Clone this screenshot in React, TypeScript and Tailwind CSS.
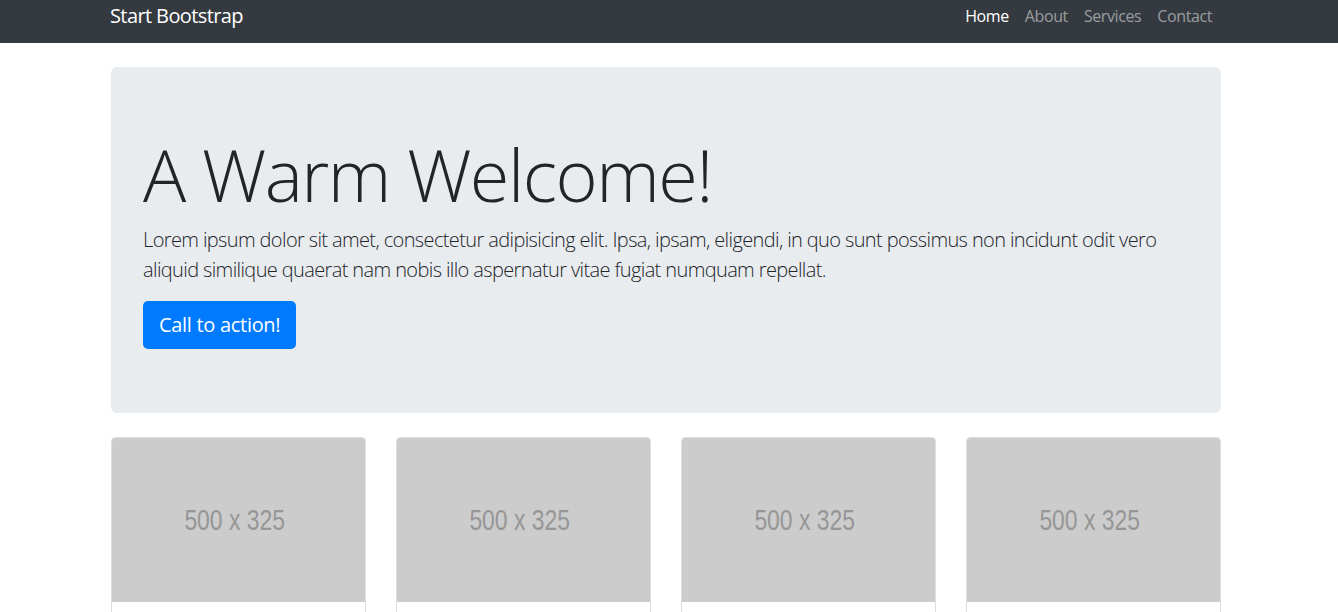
import React from "react";

const navLinks = [
  { label: "Home", active: true },
  { label: "About", active: false },
  { label: "Services", active: false },
  { label: "Contact", active: false },
];

function Placeholder() {
  return (
    <div className="h-[164px] bg-[#cccccc] flex items-center justify-center overflow-hidden pr-[7px]">
      <span
        className="text-[29px] text-[#969696] scale-x-[0.79] whitespace-nowrap"
        style={{ fontFamily: '"Liberation Sans", Arial, sans-serif' }}
      >
        500 x 325
      </span>
    </div>
  );
}

export default function App() {
  return (
    <div
      className="min-h-screen bg-white text-[#212529]"
      style={{ fontFamily: '"Open Sans", "Noto Sans", sans-serif' }}
    >
      {/* Navbar */}
      <nav className="h-[43px] bg-[#343a40]">
        <div className="w-[1110px] ml-[110px] flex items-center justify-between h-[32px]">
          <span className="text-[20px] text-white tracking-[-0.6px]">Start Bootstrap</span>
          <ul className="flex items-center">
            {navLinks.map((l) => (
              <li
                key={l.label}
                className={`px-2 text-[16px] tracking-[-0.4px] ${l.active ? "text-white" : "text-[#9a9da0]"}`}
              >
                {l.label}
              </li>
            ))}
          </ul>
        </div>
      </nav>

      <div className="w-[1110px] ml-[111px] pt-6">
        {/* Jumbotron */}
        <header className="bg-[#e9ecef] rounded-md px-8 py-16 mb-6">
          <h1 className="text-[72px] font-light leading-[1.2] mb-2 tracking-[-1.5px] whitespace-nowrap">
            A Warm Welcome!
          </h1>
          <p className="text-[20px] font-light leading-[30px] mb-4 tracking-[-0.62px] whitespace-nowrap">
            Lorem ipsum dolor sit amet, consectetur adipisicing elit. Ipsa, ipsam, eligendi, in quo sunt possimus non incidunt odit vero
            <br />
            aliquid similique quaerat nam nobis illo aspernatur vitae fugiat numquam repellat.
          </p>
          <button className="h-12 px-4 bg-[#007bff] text-white text-[20px] rounded-[5px] tracking-[-0.3px]">
            Call to action!
          </button>
        </header>

        {/* Cards */}
        <div className="grid grid-cols-4 gap-[30px]">
          {[0, 1, 2, 3].map((i) => (
            <div key={i} className="border border-[#dfdfdf] rounded-t-[4px] overflow-hidden h-[200px]">
              <Placeholder />
            </div>
          ))}
        </div>
      </div>
    </div>
  );
}
